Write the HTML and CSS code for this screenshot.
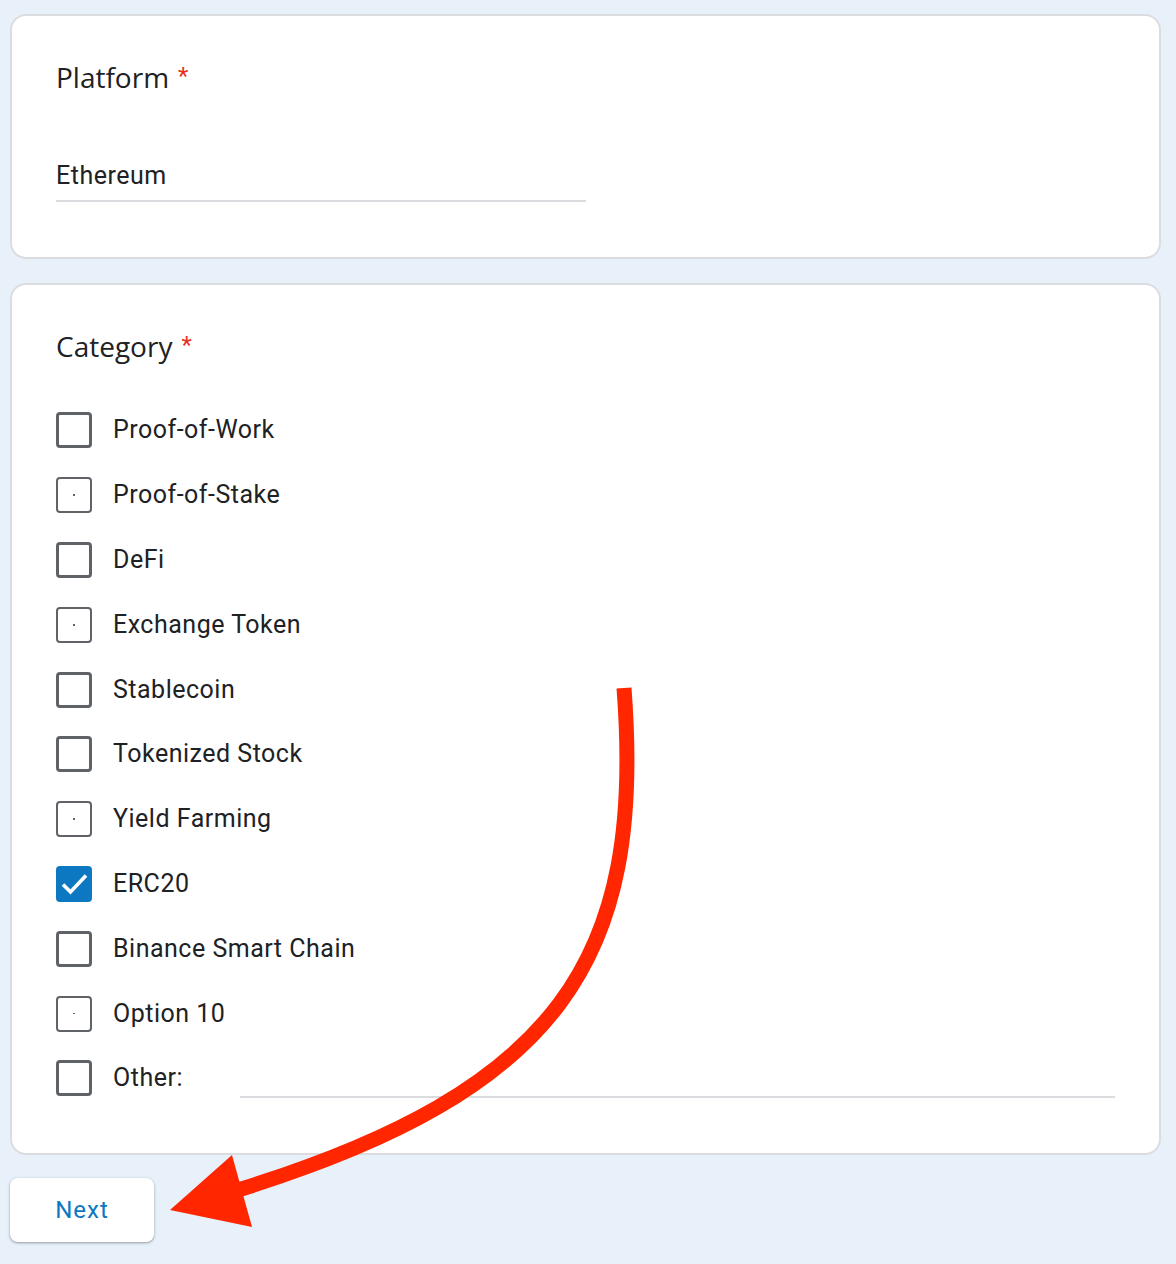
FILE: index.html
```html
<!DOCTYPE html>
<html>
<head>
<meta charset="utf-8">
<link rel="stylesheet" href="styles.css">
</head>
<body>
<div class="page">
  <div class="card card-platform">
    <div class="q-title">Platform<span class="req">*</span></div>
    <div class="text-answer">Ethereum</div>
  </div>
  <div class="card card-category">
    <div class="q-title">Category<span class="req">*</span></div>
    <div class="options">
      <div class="opt"><span class="box"></span><span class="label">Proof-of-Work</span></div>
      <div class="opt"><span class="box dotted"></span><span class="label">Proof-of-Stake</span></div>
      <div class="opt"><span class="box"></span><span class="label">DeFi</span></div>
      <div class="opt"><span class="box dotted"></span><span class="label">Exchange Token</span></div>
      <div class="opt"><span class="box"></span><span class="label">Stablecoin</span></div>
      <div class="opt"><span class="box"></span><span class="label">Tokenized Stock</span></div>
      <div class="opt"><span class="box dotted"></span><span class="label">Yield Farming</span></div>
      <div class="opt"><span class="box checked"><svg viewBox="0 0 36 36" width="36" height="36"><path d="M7 18.5 L14.5 26 L30 9.5" fill="none" stroke="#fff" stroke-width="3.6"/></svg></span><span class="label">ERC20</span></div>
      <div class="opt"><span class="box"></span><span class="label">Binance Smart Chain</span></div>
      <div class="opt"><span class="box dotted"></span><span class="label">Option 10</span></div>
      <div class="opt"><span class="box"></span><span class="label other-label">Other:</span><span class="other-line"></span></div>
    </div>
  </div>
  <div class="actions">
    <button class="next-btn">Next</button>
  </div>
</div>
<svg class="arrow" viewBox="0 0 1176 1264" width="1176" height="1264">
  <path d="M624 688 C645 960 560 1090 238 1190" fill="none" stroke="#ff2600" stroke-width="15"/>
  <polygon points="170,1210 232,1155 252,1227" fill="#ff2600"/>
</svg>
</body>
</html>
```
FILE: styles.css
```css
html, body {
  margin: 0;
  padding: 0;
}
body {
  background: #e8f1fa;
  font-family: Roboto, "Noto Sans", sans-serif;
  color: #202124;
  width: 1176px;
  height: 1264px;
  position: relative;
  overflow: hidden;
}
.page {
  padding: 14px 15px 0 10px;
  display: flex;
  flex-direction: column;
}
.card {
  background: #fff;
  border: 2px solid #dadce0;
  border-radius: 16px;
  box-sizing: border-box;
  padding: 0 44px;
}
.card-platform {
  height: 245px;
  padding-top: 41px;
}
.card-category {
  margin-top: 24px;
  height: 872px;
  padding-top: 41px;
}
.q-title {
  font-family: "Open Sans", Roboto, sans-serif;
  font-size: 28px;
  line-height: 40px;
}
.req {
  font-family: Roboto, sans-serif;
  font-size: 24px;
  margin-left: 9px;
  position: relative;
  top: -4px;
  color: #e8301c;
}
.text-answer {
  margin-top: 59px;
  width: 530px;
  font-size: 25px;
  letter-spacing: 0.5px;
  line-height: 34px;
  padding-bottom: 7px;
  border-bottom: 2px solid #dadce0;
}
.options {
  margin-top: 29px;
  display: flex;
  flex-direction: column;
}
.opt {
  display: flex;
  align-items: center;
  height: 64.8px;
}
.box {
  width: 36px;
  height: 36px;
  box-sizing: border-box;
  border: 3px solid #5f6368;
  border-radius: 4px;
  flex: none;
  position: relative;
}
.box.dotted {
  border-width: 2.5px;
}
.box.dotted::after {
  content: "";
  position: absolute;
  left: 50%;
  top: 50%;
  width: 1.5px;
  height: 1.5px;
  margin: -0.75px 0 0 -0.75px;
  background: #5f6368;
}
.box.checked {
  border: none;
  background: #0b78c1;
  border-radius: 4px;
}
.box.checked svg {
  display: block;
}
.label {
  margin-left: 21px;
  font-size: 25px;
  letter-spacing: 0.5px;
  line-height: 32px;
}
.other-label {
  width: 127px;
}
.other-line {
  flex: 1;
  align-self: flex-end;
  margin-bottom: 13px;
  height: 0;
  border-bottom: 2px solid #dadce0;
}
.actions {
  margin-top: 23px;
  display: flex;
}
.next-btn {
  width: 144px;
  height: 64px;
  background: #fff;
  border: none;
  border-radius: 8px;
  box-shadow: 0 1px 2px rgba(60,64,67,.35), 0 1px 3px 1px rgba(60,64,67,.12);
  color: #0b78c1;
  font-family: Roboto, sans-serif;
  font-size: 24px;
  font-weight: 400;
  letter-spacing: 1px;
  padding: 0;
}
.arrow {
  position: absolute;
  left: 0;
  top: 0;
  pointer-events: none;
}
```
